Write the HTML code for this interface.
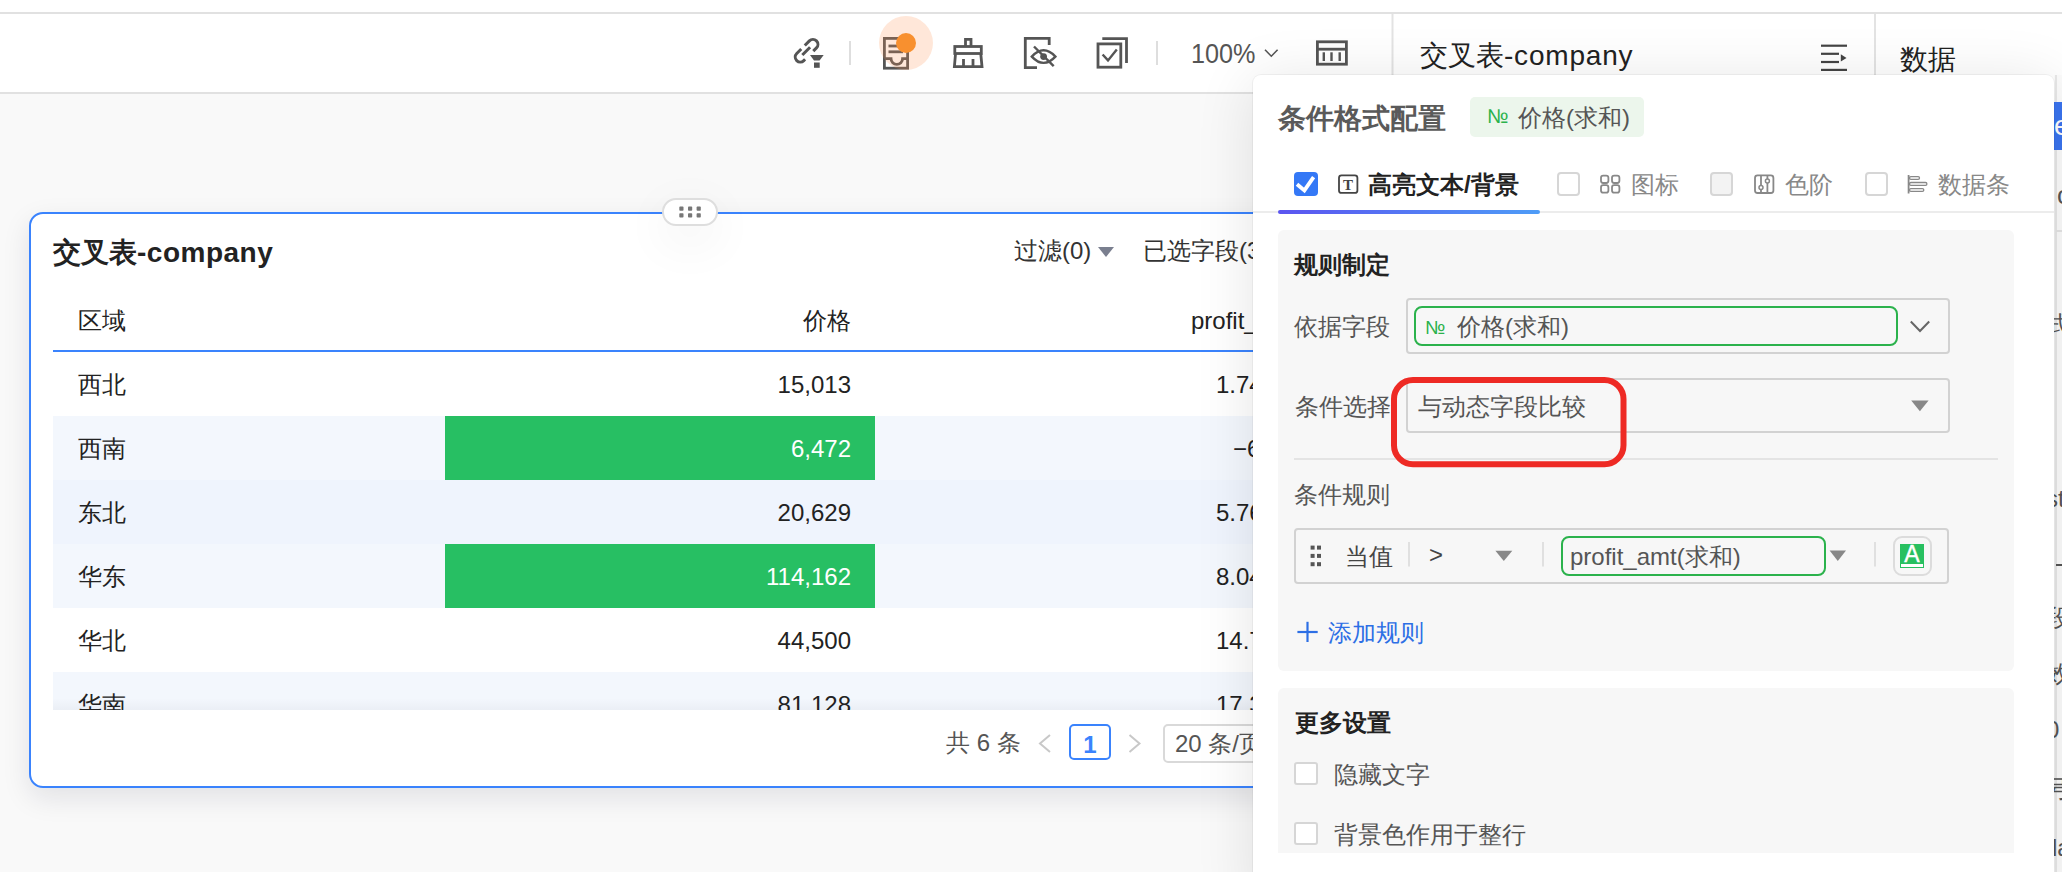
<!DOCTYPE html>
<html><head><meta charset="utf-8">
<style>
*{box-sizing:border-box;margin:0;padding:0}
html,body{width:2062px;height:872px;overflow:hidden;background:#f9f9f9;font-family:"Liberation Sans",sans-serif;color:#222}
.a{position:absolute}
.t{position:absolute;white-space:nowrap;line-height:1}
.sep{position:absolute;width:2px;background:#dcdcdc}
svg{position:absolute;overflow:visible}
</style></head>
<body>
<!-- ===== toolbar ===== -->
<div class="a" style="left:0;top:0;width:2062px;height:94px;background:#fff"></div>
<div class="a" style="left:0;top:12px;width:2062px;height:2px;background:#e1e1e1"></div>
<div class="a" style="left:0;top:92px;width:2062px;height:2px;background:#e1e1e1"></div>
<svg style="left:0;top:0" width="2062" height="94" viewBox="0 0 2062 94">
 <!-- link + funnel -->
 <g stroke="#555" stroke-width="3" fill="none" stroke-linecap="butt">
  <g transform="translate(806.2,51.1) rotate(45)">
   <path d="M-5,-3 V-9.5 a5,5 0 0 1 10,0 V-5"/>
   <path d="M-5,2 V8.4 a5,5 0 0 0 10,0 V6.6"/>
   <line x1="0" y1="-5.5" x2="0" y2="5.5"/>
  </g>
 </g>
 <path d="M810,55 H823.7 L819.6,60.5 H814 Z" fill="#555"/>
 <rect x="814" y="62.5" width="5.7" height="5.3" fill="#555"/>
 <rect x="849" y="41" width="2" height="24" fill="#dedede"/>
 <!-- doc/inbox icon -->
 <g stroke="#555" stroke-width="2.8" fill="none">
  <rect x="884.4" y="38.4" width="23.2" height="29.8"/>
  <line x1="888.5" y1="46" x2="898" y2="46"/>
  <line x1="888.5" y1="51.8" x2="903" y2="51.8"/>
  <path d="M884.4,58.6 H891 a5.8,5.8 0 0 0 11.6,0 H907.6"/>
 </g>
 <circle cx="906" cy="43" r="27" fill="rgba(255,145,81,0.22)"/>
 <circle cx="906" cy="43" r="10" fill="#f8902f"/>
 <!-- broom -->
 <g stroke="#555" stroke-width="2.8" fill="none" stroke-linejoin="miter">
  <path d="M965.5,46 V39.4 H971 V46"/>
  <rect x="954.8" y="46.5" width="26.5" height="7"/>
  <path d="M955.5,54 L954.4,66.6 H982 L980.8,54"/>
  <line x1="963.5" y1="59" x2="963.5" y2="66"/>
  <line x1="973" y1="59" x2="973" y2="66"/>
 </g>
 <!-- eye-off frame -->
 <g stroke="#555" stroke-width="2.8" fill="none">
  <path d="M1037,67.6 H1025.3 V38.4 H1049.2 V45"/>
  <path d="M1031.8,56.6 Q1043.6,44 1055.4,56.6 Q1043.6,69.2 1031.8,56.6 Z" stroke-width="2.4"/>
  <line x1="1034" y1="46.5" x2="1053.7" y2="66.2" stroke-width="2.4"/>
 </g>
 <circle cx="1043.6" cy="56.6" r="3.4" fill="#555"/>
 <!-- checkbox stack -->
 <g stroke="#555" stroke-width="2.8" fill="none">
  <rect x="1098" y="43.9" width="22.8" height="23.3"/>
  <path d="M1102.3,38.6 H1126.5 V63"/>
  <path d="M1102.6,54.5 L1108,60.4 L1116.8,49.5" stroke-width="2.4"/>
 </g>
 <rect x="1156" y="41" width="2" height="24" fill="#dedede"/>
 <path d="M1265,49.8 L1271.3,56.2 L1277.6,49.8" stroke="#555" stroke-width="1.6" fill="none"/>
 <!-- table icon -->
 <g stroke="#555" stroke-width="2.8" fill="none">
  <rect x="1317.4" y="41.8" width="29" height="22.4"/>
  <line x1="1317.4" y1="49.2" x2="1346.4" y2="49.2"/>
 </g>
 <g stroke="#555" stroke-width="2.4">
  <line x1="1323.8" y1="52.3" x2="1323.8" y2="61"/>
  <line x1="1331.5" y1="52.3" x2="1331.5" y2="61"/>
  <line x1="1339.7" y1="52.3" x2="1339.7" y2="61"/>
 </g>
 <rect x="1391.5" y="14" width="2" height="62" fill="#e3e3e3"/>
 <rect x="1874" y="14" width="2" height="62" fill="#e3e3e3"/>
 <!-- menu icon -->
 <g stroke="#444" stroke-width="2.2">
  <line x1="1821" y1="45.7" x2="1847" y2="45.7"/>
  <line x1="1821" y1="53.8" x2="1839" y2="53.8"/>
  <line x1="1821" y1="62" x2="1839" y2="62"/>
  <line x1="1821" y1="69.9" x2="1847" y2="69.9"/>
 </g>
 <path d="M1840.8,54.3 L1846.5,57.9 L1840.8,61.5 Z" fill="#444"/>
</svg>
<div class="t" style="left:1191px;top:40px;font-size:28px;color:#555;transform:scaleX(0.9);transform-origin:0 0">100%</div>
<div class="t" style="left:1420px;top:42px;font-size:28px;color:#222">交叉表<span style="letter-spacing:0.8px">-company</span></div>
<div class="t" style="left:1900px;top:46px;font-size:28px;color:#222">数据</div>


<!-- ===== card ===== -->
<div class="a" style="left:29px;top:212px;width:1300px;height:576px;border:2px solid #3a83fd;border-radius:14px;background:#fff;box-shadow:0 10px 28px rgba(15,15,50,0.10)"></div>
<div class="t" style="left:53px;top:239px;font-size:28px;font-weight:bold;color:#222">交叉表<span style="letter-spacing:0.5px">-company</span></div>
<div class="t" style="left:1014px;top:239px;font-size:24px;color:#333">过滤(0)</div>
<svg style="left:0;top:0" width="1300" height="300"><path d="M1098,247 H1114 L1106,257 Z" fill="#7a7f8f"/></svg>
<div class="t" style="left:1143px;top:239px;font-size:24px;color:#333">已选字段(3)</div>
<div class="t" style="left:78px;top:309px;font-size:24px;color:#222">区域</div>
<div class="t" style="left:750px;width:101px;text-align:right;top:309px;font-size:24px;color:#222">价格</div>
<div class="t" style="left:1191px;top:309px;font-size:24px;color:#222">profit_amt</div>
<div class="a" style="left:53px;top:350px;width:1260px;height:2px;background:#3a83fd"></div>
<div class="a" style="left:53px;top:352px;width:1260px;height:358px;overflow:hidden">
<div class="a" style="left:0;top:0px;width:1260px;height:64px;background:#fff"></div>
<div class="t" style="left:25px;top:21px;font-size:24px;color:#222">西北</div>
<div class="t" style="left:600px;width:198px;text-align:right;top:21px;font-size:24px;color:#222">15,013</div>
<div class="t" style="left:1163px;top:21px;font-size:24px;color:#222">1.74</div>
<div class="a" style="left:0;top:64px;width:1260px;height:64px;background:#f3f7fd"></div>
<div class="a" style="left:392px;top:64px;width:430px;height:64px;background:#27bf63"></div>
<div class="t" style="left:25px;top:85px;font-size:24px;color:#222">西南</div>
<div class="t" style="left:600px;width:198px;text-align:right;top:85px;font-size:24px;color:#fff">6,472</div>
<div class="t" style="left:1180px;top:85px;font-size:24px;color:#222">&#8722;6.31</div>
<div class="a" style="left:0;top:128px;width:1260px;height:64px;background:#eff4fd"></div>
<div class="t" style="left:25px;top:149px;font-size:24px;color:#222">东北</div>
<div class="t" style="left:600px;width:198px;text-align:right;top:149px;font-size:24px;color:#222">20,629</div>
<div class="t" style="left:1163px;top:149px;font-size:24px;color:#222">5.76</div>
<div class="a" style="left:0;top:192px;width:1260px;height:64px;background:#f3f7fd"></div>
<div class="a" style="left:392px;top:192px;width:430px;height:64px;background:#27bf63"></div>
<div class="t" style="left:25px;top:213px;font-size:24px;color:#222">华东</div>
<div class="t" style="left:600px;width:198px;text-align:right;top:213px;font-size:24px;color:#fff">114,162</div>
<div class="t" style="left:1163px;top:213px;font-size:24px;color:#222">8.04</div>
<div class="a" style="left:0;top:256px;width:1260px;height:64px;background:#fff"></div>
<div class="t" style="left:25px;top:277px;font-size:24px;color:#222">华北</div>
<div class="t" style="left:600px;width:198px;text-align:right;top:277px;font-size:24px;color:#222">44,500</div>
<div class="t" style="left:1163px;top:277px;font-size:24px;color:#222">14.7</div>
<div class="a" style="left:0;top:320px;width:1260px;height:64px;background:#f3f7fd"></div>
<div class="t" style="left:25px;top:341px;font-size:24px;color:#222">华南</div>
<div class="t" style="left:600px;width:198px;text-align:right;top:341px;font-size:24px;color:#222">81,128</div>
<div class="t" style="left:1163px;top:341px;font-size:24px;color:#222">17.3</div>
<div class="a" style="left:0;top:346px;width:1260px;height:12px;background:linear-gradient(rgba(0,0,30,0),rgba(0,0,30,0.035))"></div>
</div>
<div class="t" style="left:946px;top:731px;font-size:24px;color:#555">共 6 条</div>
<svg style="left:0;top:0" width="1300" height="800"><path d="M1050,735 L1040,743.5 L1050,752" stroke="#c8c8c8" stroke-width="2" fill="none"/><path d="M1129.5,735 L1139.5,743.5 L1129.5,752" stroke="#c8c8c8" stroke-width="2" fill="none"/></svg>
<div class="a" style="left:1069px;top:724px;width:42px;height:36px;border:2px solid #3a83fd;border-radius:5px"></div>
<div class="t" style="left:1069px;width:42px;text-align:center;top:733px;font-size:24px;font-weight:bold;color:#3a83fd">1</div>
<div class="a" style="left:1163px;top:724px;width:160px;height:39px;border:2px solid #d9d9d9;border-radius:5px"></div>
<div class="t" style="left:1175px;top:732px;font-size:24px;color:#555">20 条/页</div>
<div class="a" style="left:662px;top:198px;width:56px;height:28px;border:2px solid #dedede;border-radius:14px;background:#fff;box-shadow:0 14px 50px rgba(0,0,0,0.07)"></div>
<svg style="left:0;top:0" width="800" height="300"><g fill="#777"><rect x="679.3" y="206.6" width="4.2" height="4.2" rx="0.8"/><rect x="679.3" y="213.3" width="4.2" height="4.2" rx="0.8"/><rect x="688" y="206.6" width="4.2" height="4.2" rx="0.8"/><rect x="688" y="213.3" width="4.2" height="4.2" rx="0.8"/><rect x="696.6" y="206.6" width="4.2" height="4.2" rx="0.8"/><rect x="696.6" y="213.3" width="4.2" height="4.2" rx="0.8"/></g></svg>

<!-- ===== popover ===== -->
<div class="a" style="left:2054px;top:75px;width:8px;height:797px;background:#fcfcfc"></div><div class="a" style="left:2055px;top:75px;width:2px;height:797px;background:#e8e8e8"></div>
<div class="a" style="left:2054px;top:102px;width:8px;height:48px;background:#3a74f0"></div>
<div class="t" style="left:2054px;top:112px;font-size:28px;color:#fff">e</div>
<div class="t" style="left:2057px;top:182px;font-size:26px;color:#555">c</div>
<div class="a" style="left:2056px;top:230px;width:6px;height:2px;background:#e5e5e5"></div>
<div class="t" style="left:2046px;top:313px;font-size:24px;color:#555">式</div>
<div class="t" style="left:2046px;top:487px;font-size:24px;color:#555">st</div>
<div class="a" style="left:2056px;top:564px;width:6px;height:2px;background:#555"></div>
<div class="t" style="left:2046px;top:606px;font-size:24px;color:#555">段</div>
<div class="t" style="left:2046px;top:662px;font-size:24px;color:#555">效</div>
<div class="t" style="left:2046px;top:718px;font-size:24px;color:#555">0</div>
<div class="t" style="left:2046px;top:777px;font-size:24px;color:#555">号</div>
<div class="t" style="left:2052px;top:836px;font-size:24px;color:#555">la</div>
<div class="a" style="left:1253px;top:75px;width:801px;height:830px;background:#fff;border-radius:8px;box-shadow:0 0 0 1px rgba(0,0,0,0.045),0 6px 60px rgba(0,0,0,0.11)"></div>
<div class="t" style="left:1278px;top:105px;font-size:28px;font-weight:bold;color:#5a5a5a">条件格式配置</div>
<div class="a" style="left:1470px;top:97px;width:174px;height:40px;background:#ecf6ec;border-radius:5px"></div>
<div class="t" style="left:1487px;top:106px;font-size:20px;color:#2bb24c">№</div>
<div class="t" style="left:1518px;top:106px;font-size:24px;color:#555">价格(求和)</div>
<div class="a" style="left:1253px;top:211px;width:801px;height:2px;background:#ececec"></div>
<div class="a" style="left:1278px;top:210px;width:262px;height:4px;border-radius:2px;background:linear-gradient(90deg,#5b55f0,#4e9cf7)"></div>
<div class="a" style="left:1294px;top:172px;width:24px;height:24px;border-radius:4px;background:#3478f6"></div>
<svg style="left:0;top:0" width="2062" height="872"><path d="M1297,184.2 L1304.4,190.4 L1313.6,177.2" stroke="#fff" stroke-width="3.8" fill="none"/></svg>
<div class="a" style="left:1556.5px;top:172.3px;width:23.4px;height:23.4px;border-radius:4px;border:2px solid #d6d6d6;background:#fff"></div>
<div class="a" style="left:1864.6px;top:172.3px;width:23.4px;height:23.4px;border-radius:4px;border:2px solid #d6d6d6;background:#fff"></div>
<div class="a" style="left:1710px;top:172.3px;width:23.4px;height:23.4px;border-radius:4px;border:2px solid #d6d6d6;background:#f3f3f3"></div>
<div class="t" style="left:1368px;top:173px;font-size:24px;font-weight:bold;color:#222">高亮文本/背景</div>
<div class="t" style="left:1631px;top:173px;font-size:24px;color:#888">图标</div>
<div class="t" style="left:1785px;top:173px;font-size:24px;color:#888">色阶</div>
<div class="t" style="left:1938px;top:173px;font-size:24px;color:#888">数据条</div>
<svg style="left:0;top:0" width="2062" height="872">
<g fill="none" stroke="#444" stroke-width="1.8"><rect x="1339" y="175.3" width="18.4" height="17.6" rx="2.5"/></g>
<text x="1348" y="189.6" font-family="Liberation Serif" font-size="15" font-weight="bold" text-anchor="middle" fill="#444">T</text>
<g fill="none" stroke="#888" stroke-width="1.8">
 <rect x="1601" y="175.6" width="7.4" height="7.4" rx="2.2"/><rect x="1612" y="175.6" width="7.4" height="7.4" rx="2.2"/>
 <rect x="1601" y="185.2" width="7.4" height="7.4" rx="2.2"/><rect x="1612" y="185.2" width="7.4" height="7.4" rx="2.2"/>
 <rect x="1755" y="175.4" width="18.4" height="17.6" rx="2.5"/>
 <line x1="1761" y1="175.4" x2="1761" y2="193"/><line x1="1767.4" y1="175.4" x2="1767.4" y2="193"/>
 <line x1="1908.6" y1="175" x2="1908.6" y2="193.5"/>
 <rect x="1909.5" y="176.6" width="10" height="2.8" rx="1.4" stroke-width="1.3"/><rect x="1909.5" y="182.5" width="17.4" height="2.8" rx="1.4" stroke-width="1.3"/><rect x="1909.5" y="188.6" width="14.3" height="2.8" rx="1.4" stroke-width="1.3"/>
</g>
<circle cx="1761" cy="187.5" r="2" fill="#fff" stroke="#888" stroke-width="1.5"/>
<circle cx="1767.4" cy="181" r="2" fill="#fff" stroke="#888" stroke-width="1.5"/>
</svg>
<div class="a" style="left:1278px;top:230px;width:736px;height:441px;background:#f7f7f7;border-radius:6px"></div>
<div class="t" style="left:1294px;top:253px;font-size:24px;font-weight:bold;color:#222">规则制定</div>
<div class="t" style="left:1294px;top:315px;font-size:24px;color:#555">依据字段</div>
<div class="a" style="left:1406px;top:298px;width:544px;height:56px;border:2px solid #d2d2d2;border-radius:4px"></div>
<div class="a" style="left:1414px;top:306px;width:484px;height:40px;border:2px solid #2bb24c;border-radius:8px"></div>
<div class="t" style="left:1425px;top:318px;font-size:19px;color:#2bb24c">№</div>
<div class="t" style="left:1457px;top:315px;font-size:24px;color:#555">价格(求和)</div>
<div class="t" style="left:1295px;top:395px;font-size:24px;color:#555">条件选择</div>
<div class="a" style="left:1406px;top:378px;width:544px;height:55px;border:2px solid #d2d2d2;border-radius:4px"></div>
<div class="t" style="left:1418px;top:395px;font-size:24px;color:#555">与动态字段比较</div>
<div class="a" style="left:1294px;top:457.5px;width:704px;height:2px;background:#e4e4e4"></div>
<div class="t" style="left:1294px;top:483px;font-size:24px;color:#555">条件规则</div>
<div class="a" style="left:1294px;top:528px;width:655px;height:55.5px;border:2px solid #d2d2d2;border-radius:4px"></div>
<div class="t" style="left:1345px;top:545px;font-size:24px;color:#444">当值</div>
<div class="t" style="left:1429px;top:543px;font-size:24px;color:#444">&gt;</div>
<div class="a" style="left:1560.5px;top:536.4px;width:265px;height:39.2px;border:2px solid #2bb24c;border-radius:8px"></div>
<div class="t" style="left:1570px;top:545px;font-size:24px;color:#555">profit_amt(求和)</div>
<div class="a" style="left:1892.5px;top:536px;width:39px;height:39.5px;border:2px solid #dcdcdc;border-radius:9px"></div>
<div class="a" style="left:1900px;top:544px;width:24px;height:24px;background:#27c060"></div>
<div class="t" style="left:1900px;width:24px;text-align:center;top:543px;font-size:23px;color:#fff;-webkit-text-stroke:0.4px #fff">A</div>
<div class="a" style="left:1901px;top:564px;width:22px;height:3px;background:#fff"></div>
<div class="t" style="left:1328px;top:621px;font-size:24px;color:#2d6fe5">添加规则</div>
<svg style="left:0;top:0" width="2062" height="872">
<g fill="none" stroke="#666" stroke-width="2"><path d="M1910.8,321.5 L1920,331 L1929.2,321.5"/></g>
<g fill="#888">
 <path d="M1911.2,400.4 H1928.6 L1919.9,411.2 Z"/>
 <path d="M1495.4,550.7 H1512.3 L1503.8,561 Z"/>
 <path d="M1829.6,550.6 H1846 L1837.8,561 Z"/>
</g>
<g fill="#555">
 <rect x="1310.6" y="545.6" width="4" height="4"/><rect x="1317" y="545.6" width="4" height="4"/>
 <rect x="1310.6" y="553.9" width="4" height="4"/><rect x="1317" y="553.9" width="4" height="4"/>
 <rect x="1310.6" y="562.2" width="4" height="4"/><rect x="1317" y="562.2" width="4" height="4"/>
</g>
<g fill="#e0e0e0"><rect x="1408" y="542" width="2" height="24.5"/><rect x="1542" y="542" width="2" height="24.5"/><rect x="1874" y="542" width="2" height="24.5"/></g>
<g stroke="#2d6fe5" stroke-width="2.2"><line x1="1297.4" y1="632" x2="1317.7" y2="632"/><line x1="1307.5" y1="621.8" x2="1307.5" y2="642"/></g>
<rect x="1394" y="380" width="229.5" height="84.3" rx="19" fill="none" stroke="#ee2a24" stroke-width="6"/>
</svg>
<div class="a" style="left:1278px;top:688px;width:736px;height:165px;background:#f7f7f7;border-radius:6px 6px 0 0"></div>
<div class="t" style="left:1295px;top:711px;font-size:24px;font-weight:bold;color:#222">更多设置</div>
<div class="a" style="left:1294.3px;top:762px;width:23.4px;height:23.4px;border-radius:3px;border:2px solid #d6d6d6;background:#fff"></div>
<div class="a" style="left:1294.3px;top:822px;width:23.4px;height:23.4px;border-radius:3px;border:2px solid #d6d6d6;background:#fff"></div>
<div class="t" style="left:1334px;top:763px;font-size:24px;color:#555">隐藏文字</div>
<div class="t" style="left:1334px;top:823px;font-size:24px;color:#555">背景色作用于整行</div>
</body></html>
